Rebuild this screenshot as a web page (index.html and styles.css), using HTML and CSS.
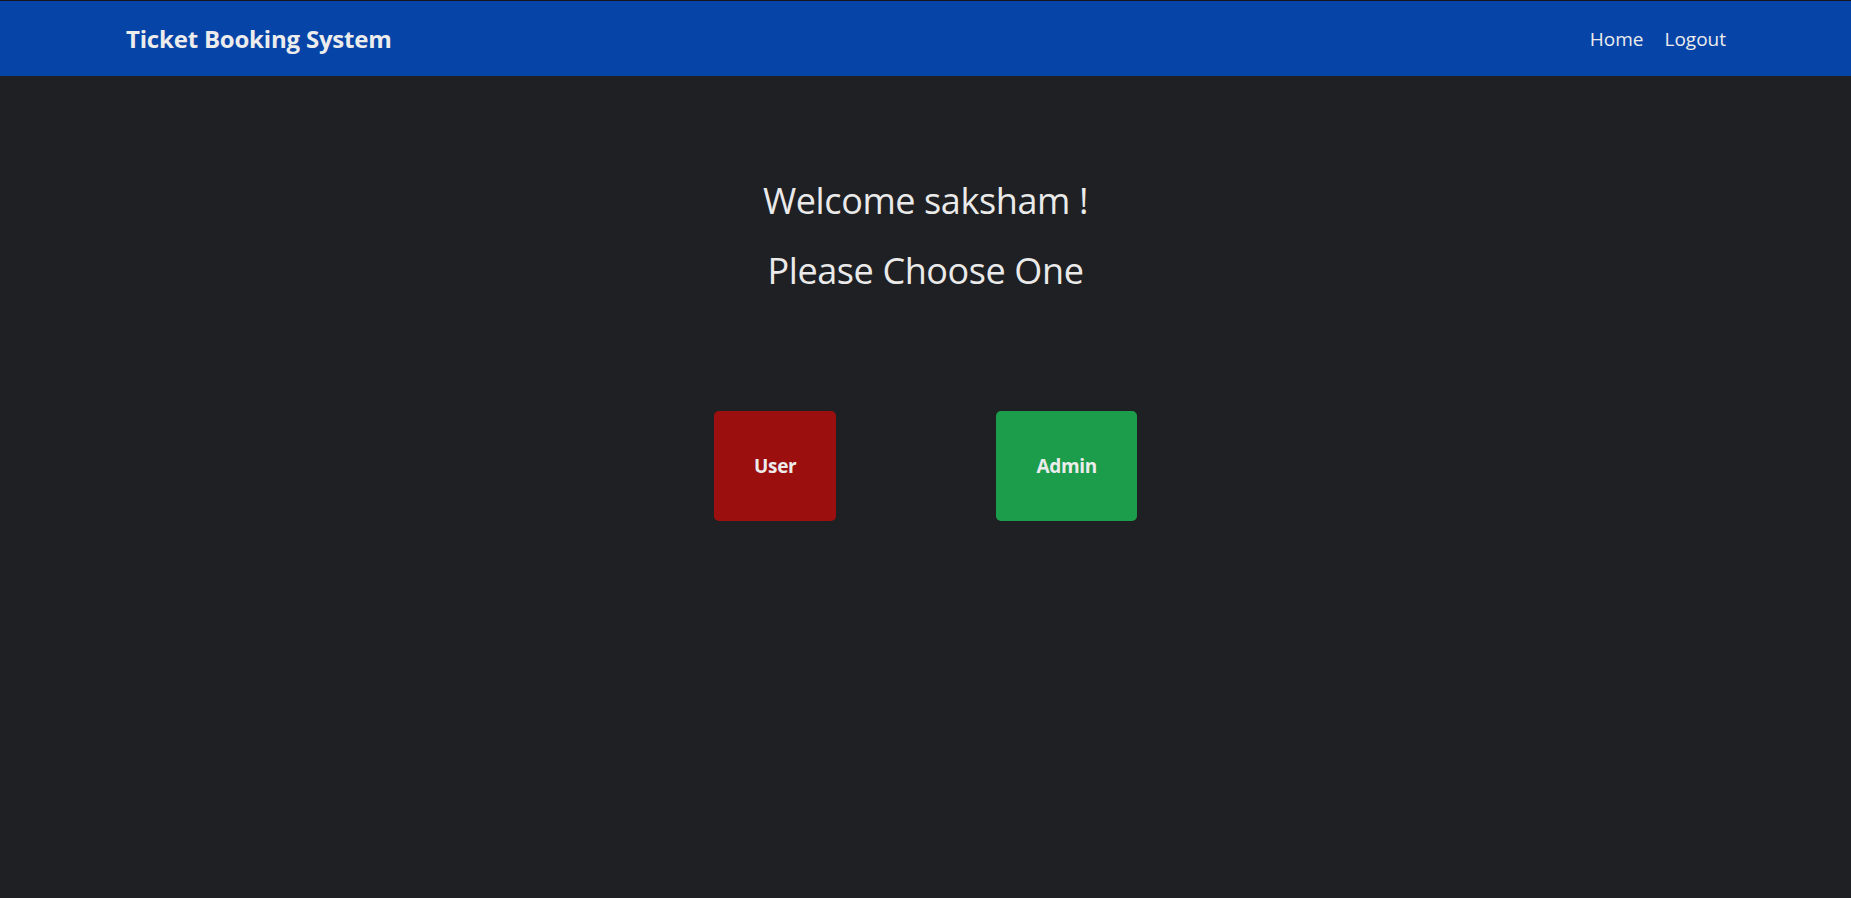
FILE: index.html
```html
<!DOCTYPE html>
<html lang="en">
<head>
<meta charset="utf-8">
<title>Ticket Booking System</title>
<link rel="stylesheet" href="styles.css">
</head>
<body>
<nav class="navbar">
  <div class="nav-inner">
    <a class="brand" href="#">Ticket Booking System</a>
    <div class="nav-links">
      <a class="nav-link" href="#">Home</a>
      <a class="nav-link" href="#">Logout</a>
    </div>
  </div>
</nav>
<main class="main">
  <h2 class="title">Welcome saksham !</h2>
  <h2 class="title">Please Choose One</h2>
  <div class="choices">
    <a class="choice choice-user" href="#">User</a>
    <a class="choice choice-admin" href="#">Admin</a>
  </div>
</main>
</body>
</html>
```

FILE: styles.css
```css
* { box-sizing: border-box; }
html, body {
  margin: 0;
  height: 100%;
}
body {
  background: #1f2023;
  color: #e9e9e9;
  font-family: "Open Sans", "Noto Sans", sans-serif;
  border-top: 1px solid #14161c;
}
a { text-decoration: none; }

.navbar {
  background: #0744a8;
  height: 75px;
}
.nav-inner {
  height: 100%;
  padding: 0 125px 0 126px;
  display: flex;
  align-items: center;
  justify-content: space-between;
}
.brand {
  color: #ececec;
  font-weight: 700;
  font-size: 24px;
  letter-spacing: -0.2px;
  margin-top: -1px;
}
.nav-links {
  display: flex;
  gap: 21px;
}
.nav-link {
  color: #ececec;
  font-size: 19px;
}

.main {
  padding-top: 101px;
  display: flex;
  flex-direction: column;
  align-items: center;
}
.title {
  margin: 0 0 22px;
  font-size: 36px;
  letter-spacing: -0.4px;
  font-weight: 400;
  line-height: 48px;
  color: #eaeaea;
}
.choices {
  margin-top: 94px;
  display: flex;
  gap: 160px;
}
.choice {
  height: 110px;
  padding: 0 40px;
  border-radius: 5px;
  display: flex;
  align-items: center;
  justify-content: center;
  color: #ececec;
  font-weight: 700;
  font-size: 19px;
  letter-spacing: -0.3px;
}
.choice-user { background: #9c0f0f; }
.choice-admin { background: #1c9d4c; }
```
